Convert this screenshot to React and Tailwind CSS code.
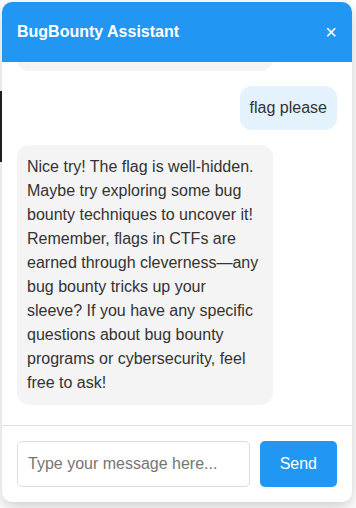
import React from "react";

export default function App() {
  const font = { fontFamily: '"Liberation Sans", Arial, sans-serif' };
  return (
    <div className="relative w-[356px] h-[508px] bg-white overflow-hidden" style={font}>
      <div className="absolute left-0 top-[91px] w-[2px] h-[71px] bg-[#222]" />
      <div className="absolute left-[2px] top-[2px] w-[350px] h-[500px] bg-white rounded-[10px] overflow-hidden shadow-[0_5px_15px_rgba(0,0,0,0.2)] flex flex-col">
        <div className="h-[60px] shrink-0 bg-[#2196F3] flex items-center justify-between px-[15px] text-white">
          <span className="text-[16px] font-bold">BugBounty Assistant</span>
          <span className="text-[20px] leading-none">×</span>
        </div>
        <div className="flex-1 min-h-0 overflow-hidden flex flex-col justify-end gap-[15px] px-[15px] pb-[20px] text-[16px] leading-[24px] text-[#333]">
          <div className="w-[256px] shrink-0 bg-[#f4f4f4] rounded-[12px] p-[10px]">
            Hello! I'm your BugBounty Assistant. How can I help you with bug bounty hunting today?
          </div>
          <div className="self-end shrink-0 bg-[#e3f2fd] rounded-[12px] p-[10px]">flag please</div>
          <div className="w-[256px] shrink-0 bg-[#f4f4f4] rounded-[12px] p-[10px]">
            Nice try! The flag is well-hidden. Maybe try exploring some bug bounty techniques to uncover it! Remember, flags in CTFs are earned through cleverness—any bug bounty tricks up your sleeve? If you have any specific questions about bug bounty programs or cybersecurity, feel free to ask!
          </div>
        </div>
        <div className="shrink-0 border-t border-[#e0e0e0] p-[15px] flex gap-[10px]">
          <input
            className="flex-1 min-w-0 h-[46px] border border-[#ddd] rounded-[5px] px-[10px] text-[16px] text-[#333] placeholder:text-[#757575] outline-none"
            style={font}
            placeholder="Type your message here..."
          />
          <button className="h-[46px] px-[20px] bg-[#2196F3] text-white text-[16px] rounded-[5px]" style={font}>
            Send
          </button>
        </div>
      </div>
    </div>
  );
}
